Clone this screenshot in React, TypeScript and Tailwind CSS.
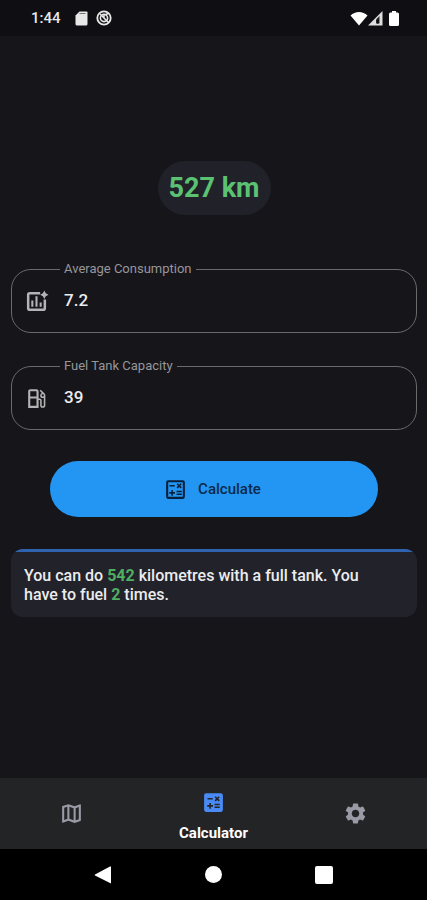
import type { ReactNode } from "react";
import {
  MdCalculate,
  MdOutlineCalculate,
  MdOutlineLocalGasStation,
  MdOutlineMap,
  MdSettings,
} from "react-icons/md";

function StatusBar() {
  return (
    <header className="flex h-9 shrink-0 items-center justify-between bg-[#0f0e12] pr-7 pl-[31px] text-[#e8e8e8]">
      <div className="flex items-center">
        <span className="text-[15px] font-medium">1:44</span>
        <svg viewBox="0 0 13 15" className="ml-3.5 h-[15px] w-[13px]" fill="currentColor" aria-hidden="true">
          <path d="M4.5 0.5H11.5Q12.5 0.5 12.5 1.5V13Q12.5 14.5 11 14.5H2Q0.5 14.5 0.5 13V4.5Z" />
          <path d="M4.5 2.5H10.500" stroke="#77777a" strokeWidth="1" />
        </svg>
        <svg viewBox="0 0 16 16" className="ml-2 size-4" fill="none" stroke="currentColor" aria-hidden="true">
          <circle cx="8" cy="8" r="6.700" strokeWidth="1.800" />
          <circle cx="8" cy="8" r="3.600" strokeWidth="1.600" />
          <path d="M4 4L12.500 12.500M8 7.500V5M10 4.500L12 3.500" strokeWidth="1.500" />
        </svg>
      </div>
      <div className="flex items-center">
        <svg viewBox="0 0 18 15" className="h-[15px] w-[18px]" fill="#ffffff" aria-hidden="true">
          <path d="M0.500 4.500C5 -0.300 13 -0.300 17.500 4.500L9 14.500Z" />
        </svg>
        <svg viewBox="0 0 15 15" className="h-[15px] w-[15px]" aria-hidden="true">
          <path d="M0 14.500L14.500 0V14.500Z" fill="#dedede" />
          <path d="M8 8.500L11.500 5V12.500H8Z" fill="#28282b" />
          <path d="M9 8.500H10.500V12.500H9Z" fill="#08080a" />
        </svg>
        <svg viewBox="0 0 10 15" className="ml-1.5 h-[15px] w-[10px]" fill="#ffffff" aria-hidden="true">
          <path d="M3 0H7V1.500H8.500Q10 1.500 10 3V13.500Q10 15 8.500 15H1.500Q0 15 0 13.500V3Q0 1.500 1.500 1.500H3Z" />
        </svg>
      </div>
    </header>
  );
}

function ChartSparkIcon() {
  return (
    <svg viewBox="0 0 24 24" className="size-[25px]" fill="none" stroke="currentColor" aria-hidden="true">
      <path d="M15.500 4H5.500Q4 4 4 5.500V18.500Q4 20 5.500 20H18.500Q20 20 20 18.500V10" strokeWidth="2.400" />
      <path d="M8 17V11M12 17V7M16 17V13" strokeWidth="2" />
      <path d="M19.500 1.500L20.900 4.100L23.500 5.500L20.900 6.900L19.500 9.500L18.100 6.900L15.500 5.500L18.100 4.100Z" fill="currentColor" stroke="none" />
    </svg>
  );
}

type FieldProps = { id: string; label: string; value: string; icon: ReactNode };

function Field({ id, label, value, icon }: FieldProps) {
  return (
    <fieldset className="h-[71px] min-w-0 rounded-[20px] border border-[#6a6a6d] pl-12 text-[#b4b4b6]">
      <legend className="px-1 text-[13px] leading-[14px] text-[#97979a]">
        <label htmlFor={id}>{label}</label>
      </legend>
      <div className="-ml-9 flex h-[50px] items-center gap-[15px]">
        {icon}
        <input
          id={id}
          type="text"
          inputMode="decimal"
          defaultValue={value}
          className="min-w-0 flex-1 bg-transparent pr-4 text-[17px] font-medium text-[#ececee] outline-none"
        />
      </div>
    </fieldset>
  );
}

function BottomTabs() {
  return (
    <nav className="grid h-[71px] shrink-0 grid-cols-3 bg-[#232425] text-[#9a99a5]">
      <button type="button" aria-label="Map" className="flex items-center justify-center">
        <MdOutlineMap className="size-[25px]" />
      </button>
      <button type="button" aria-current="page" className="flex flex-col items-center justify-center gap-2 pt-[5px]">
        <MdCalculate className="size-[25px] text-[#4a8af4]" />
        <span className="text-[15px] leading-5 font-bold text-white">Calculator</span>
      </button>
      <button type="button" aria-label="Settings" className="flex items-center justify-center">
        <MdSettings className="size-[25px]" />
      </button>
    </nav>
  );
}

function SystemBar() {
  return (
    <footer className="flex h-[51px] shrink-0 items-center justify-center gap-[93px] bg-black">
      <button type="button" aria-label="Back">
        <svg viewBox="0 0 18 18" className="size-[18px]" fill="#ffffff" aria-hidden="true">
          <path d="M17 0.500V17.500L1 9.500Q0.200 9 1 8.500L16 0.500Z" />
        </svg>
      </button>
      <button type="button" aria-label="Home" className="size-[17px] rounded-full bg-white" />
      <button type="button" aria-label="Recent apps" className="size-[18px] rounded-[2px] bg-white" />
    </footer>
  );
}

export default function App() {
  return (
    <div className="flex min-h-screen flex-col bg-[#16151a] font-[Roboto,sans-serif]">
      <StatusBar />
      <main className="flex flex-1 flex-col pt-[125px] pr-2.5 pl-[11px]">
        <output className="self-center rounded-full bg-[#21212a] px-[11px] pt-px text-[27px] leading-[53px] font-bold text-[#5bc273]">
          527 km
        </output>
        <form className="mt-[47px] flex flex-col gap-[26px]" onSubmit={(event) => event.preventDefault()}>
          <Field id="consumption" label="Average Consumption" value="7.2" icon={<ChartSparkIcon />} />
          <Field
            id="capacity"
            label="Fuel Tank Capacity"
            value="39"
            icon={<MdOutlineLocalGasStation className="size-[25px]" />}
          />
          <button
            type="submit"
            className="mx-[39px] mt-[5px] flex h-14 items-center justify-center gap-2.5 rounded-full bg-[#2396f3] pr-1 text-[15px] font-medium text-[#0b2a4c]"
          >
            <MdOutlineCalculate className="size-[25px] text-[#08203a]" />
            Calculate
          </button>
        </form>
        <section className="mt-8 overflow-hidden rounded-xl bg-[#22222a]">
          <div className="h-[3px] bg-[#2f63b0]" />
          <p className="pt-3.5 pr-6 pb-[13px] pl-[13px] text-[16px] leading-[19px] font-medium text-[#ececee]">
            You can do <strong className="font-bold text-[#4fae62]">542</strong> kilometres with a full tank. You have
            to fuel <strong className="font-bold text-[#4fae62]">2</strong> times.
          </p>
        </section>
      </main>
      <BottomTabs />
      <SystemBar />
    </div>
  );
}
